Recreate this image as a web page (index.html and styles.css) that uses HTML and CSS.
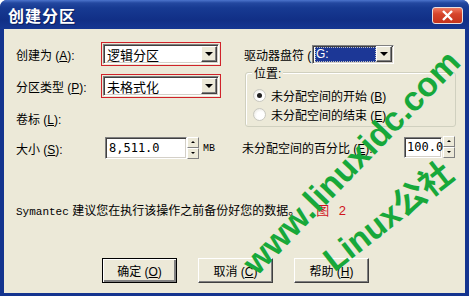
FILE: index.html
```html
<!DOCTYPE html>
<html lang="zh-CN">
<head>
    <meta charset="UTF-8">
    <title>创建分区</title>
    <link rel="stylesheet" href="styles.css">
</head>
<body>
    <div class="window">
        <div class="titlebar">
            <span class="title">创建分区</span>
            <span class="close">
                <svg width="13" height="11" viewBox="0 0 13 11"><path d="M2 1 L11 10 M11 1 L2 10" stroke="#fff" stroke-width="2.4"/></svg>
            </span>
        </div>
        <div class="client">
            <div class="form">
                <div class="col-left">
                    <div class="row r1">
                        <span class="label">创建为 (<u>A</u>):</span>
                        <div class="hilite">
                            <div class="combo wide"><span class="value">逻辑分区</span><span class="drop"></span></div>
                        </div>
                    </div>
                    <div class="row r2">
                        <span class="label">分区类型 (<u>P</u>):</span>
                        <div class="hilite">
                            <div class="combo wide"><span class="value">未格式化</span><span class="drop"></span></div>
                        </div>
                    </div>
                    <div class="row r3">
                        <span class="label">卷标 (<u>L</u>):</span>
                    </div>
                    <div class="row r4">
                        <span class="label">大小 (<u>S</u>):</span>
                        <div class="field size"><span class="value mono">8,511.0</span></div>
                        <div class="spin"><span class="up"></span><span class="down"></span></div>
                        <span class="unit">MB</span>
                    </div>
                </div>
                <div class="col-right">
                    <div class="row r1">
                        <span class="label drive-label">驱动器盘符 (</span>
                        <div class="combo drive"><span class="value selected">G:</span><span class="drop"></span></div>
                    </div>
                    <div class="group">
                        <span class="legend">位置:</span>
                        <div class="radio-row"><span class="radio checked"></span><span>未分配空间的开始 (<u>B</u>)</span></div>
                        <div class="radio-row"><span class="radio"></span><span>未分配空间的结束 (<u>E</u>)</span></div>
                    </div>
                    <div class="row r4">
                        <span class="label pct-label">未分配空间的百分比 (<u>E</u>):</span>
                        <div class="field pct"><span class="value mono">100.0</span></div>
                        <div class="spin"><span class="up"></span><span class="down"></span></div>
                    </div>
                </div>
            </div>
            <p class="note"><span class="mono">Symantec</span> 建议您在执行该操作之前备份好您的数据。<span class="fig">图 2</span></p>
            <div class="buttons">
                <button class="btn default">确定 (<u>O</u>)</button>
                <button class="btn">取消 (<u>C</u>)</button>
                <button class="btn">帮助 (<u>H</u>)</button>
            </div>
        </div>
        <div class="mark mark-url">www.linuxidc.com</div>
        <div class="mark mark-name">Linux公社</div>
    </div>
</body>
</html>
```

FILE: styles.css
```css
* {
    box-sizing: border-box;
}
body {
    margin: 0;
    background: #fff;
    font-family: "Liberation Sans", "Noto Sans CJK SC", sans-serif;
    font-size: 12px;
    color: #000;
}
.window {
    position: relative;
    width: 469px;
    height: 296px;
    overflow: hidden;
    display: flex;
    flex-direction: column;
    background: #14348f;
    border-radius: 7px 7px 0 0;
}
.titlebar {
    flex: none;
    height: 29px;
    display: flex;
    align-items: center;
    justify-content: space-between;
    padding: 0 6px 0 8px;
    background: linear-gradient(#4c74cc 0, #23479f 3px, #173a92 8px, #112f86 20px, #163792 29px);
}
.title {
    color: #fff;
    font-size: 16px;
    font-weight: bold;
    letter-spacing: 1px;
    text-shadow: 1px 1px #0a1e5c;
}
.close {
    width: 31px;
    height: 17px;
    display: flex;
    align-items: center;
    justify-content: center;
    margin-top: 2px;
    border: 1px solid #e8e0e0;
    border-radius: 3px;
    background: linear-gradient(#f07a62, #d6452b 40%, #c4321c);
}
.client {
    flex: 1;
    margin: 0 4px 3px;
    padding: 14px 0 0 12px;
    background: #ece9d8;
}
.form {
    display: flex;
    gap: 22px;
}
.col-left {
    width: 206px;
}
.col-right {
    width: 212px;
}
.row {
    height: 22px;
    display: flex;
    align-items: center;
}
.r2, .r3 {
    margin-top: 10px;
}
.col-left .r4 {
    margin-top: 8px;
}
.label {
    width: 86px;
    flex: none;
    white-space: nowrap;
}
.hilite {
    border: 1px solid #d0222a;
    padding: 1px 1px;
    margin-left: -1px;
}
.combo, .field {
    height: 20px;
    display: flex;
    align-items: center;
    background: #fff;
    border: 1px solid;
    border-color: #808080 #fff #fff #808080;
    box-shadow: inset 1px 1px #404040, inset -1px -1px #d4d0c8;
}
.combo.wide {
    width: 116px;
}
.value {
    flex: 1;
    padding-left: 3px;
    font-size: 13px;
    white-space: nowrap;
}
.drop {
    width: 16px;
    height: 16px;
    margin-right: 1px;
    position: relative;
    background: #ece9d8;
    border: 1px solid;
    border-color: #fff #404040 #404040 #fff;
    box-shadow: inset -1px -1px #808080;
}
.drop::after {
    content: "";
    position: absolute;
    left: 3px;
    top: 5px;
    border-left: 4px solid transparent;
    border-right: 4px solid transparent;
    border-top: 4px solid #000;
}
.mono {
    font-family: "Liberation Mono", monospace;
    font-size: 10px;
}
.field .mono {
    font-family: "DejaVu Sans Mono", monospace;
    font-size: 12px;
}
.field.size {
    width: 82px;
    margin-left: 3px;
    height: 22px;
}
.spin {
    width: 12px;
    height: 22px;
    display: flex;
    flex-direction: column;
}
.spin span {
    flex: 1;
    position: relative;
    background: #ece9d8;
    border: 1px solid;
    border-color: #fff #808080 #808080 #fff;
}
.spin .up::after, .spin .down::after {
    content: "";
    position: absolute;
    left: 3px;
    top: 3px;
    border-left: 2px solid transparent;
    border-right: 2px solid transparent;
}
.spin .up::after {
    border-bottom: 2px solid #000;
}
.spin .down::after {
    border-top: 2px solid #000;
}
.unit {
    margin-left: 4px;
    font-family: "Liberation Mono", monospace;
    font-size: 10px;
}
.drive-label {
    width: 68px;
}
.combo.drive {
    width: 82px;
    height: 19px;
}
.value.selected {
    margin: 1px 0 1px 2px;
    padding-left: 1px;
    height: 15px;
    line-height: 14px;
    color: #fff;
    font-size: 12px;
    background: #1c3796;
    outline: 1px dotted #c0c0c0;
    outline-offset: -1px;
}
.group {
    position: relative;
    margin: 7px 0 0 1px;
    height: 55px;
    padding: 13px 0 0 7px;
    border: 1px solid #d0d0bf;
    border-radius: 3px;
    box-shadow: inset 1px 1px #fff;
}
.legend {
    position: absolute;
    left: 6px;
    top: -5px;
    padding: 0 2px;
    line-height: 13px;
    background: #ece9d8;
    font-size: 12px;
}
.radio-row {
    height: 19px;
    display: flex;
    align-items: center;
    gap: 5px;
    white-space: nowrap;
}
.radio {
    width: 13px;
    height: 13px;
    border-radius: 50%;
    border: 1px solid #c8c8c0;
    background: radial-gradient(circle at 60% 60%, #fff 40%, #e2e0d8);
    position: relative;
}
.radio.checked::after {
    content: "";
    position: absolute;
    left: 3px;
    top: 3px;
    width: 5px;
    height: 5px;
    border-radius: 50%;
    background: #222;
}
.col-right .r4 {
    margin-top: 9px;
}
.pct-label {
    width: 162px;
    margin-left: -2px;
}
.field.pct {
    width: 38px;
    height: 21px;
}
.field.pct .value {
    padding-left: 2px;
}
.col-right .spin {
    margin-left: 1px;
}
.note {
    margin: 44px 0 0;
    height: 16px;
    line-height: 16px;
    white-space: nowrap;
    font-size: 12px;
}
.note .mono {
    font-size: 11px;
}
.fig {
    margin-left: 16px;
    color: #d0141c;
    font-size: 13px;
    word-spacing: 6px;
}
.buttons {
    margin-top: 39px;
    padding-left: 86px;
    display: flex;
    gap: 21px;
}
.btn {
    width: 75px;
    height: 25px;
    padding: 0;
    font-family: "Liberation Sans", "Noto Sans CJK SC", sans-serif;
    font-size: 12px;
    color: #000;
    background: #ece9d8;
    border: 1px solid;
    border-color: #fff #404040 #404040 #fff;
    box-shadow: inset -1px -1px #808080;
}
.btn.default {
    border: 1px solid #000;
    box-shadow: inset 1px 1px #fff, inset -2px -2px #808080;
}
.mark {
    position: absolute;
    left: 0;
    top: 0;
    color: #17a83a;
    font-family: "Liberation Sans", "Noto Sans CJK SC", sans-serif;
    font-weight: bold;
    white-space: nowrap;
    line-height: 1;
}
.mark-url {
    font-size: 34px;
    transform: translate(351px, 162px) translate(-50%, -50%) rotate(-46deg);
}
.mark-name {
    font-size: 33px;
    transform: translate(388px, 216px) translate(-50%, -50%) rotate(-38deg);
}
```
